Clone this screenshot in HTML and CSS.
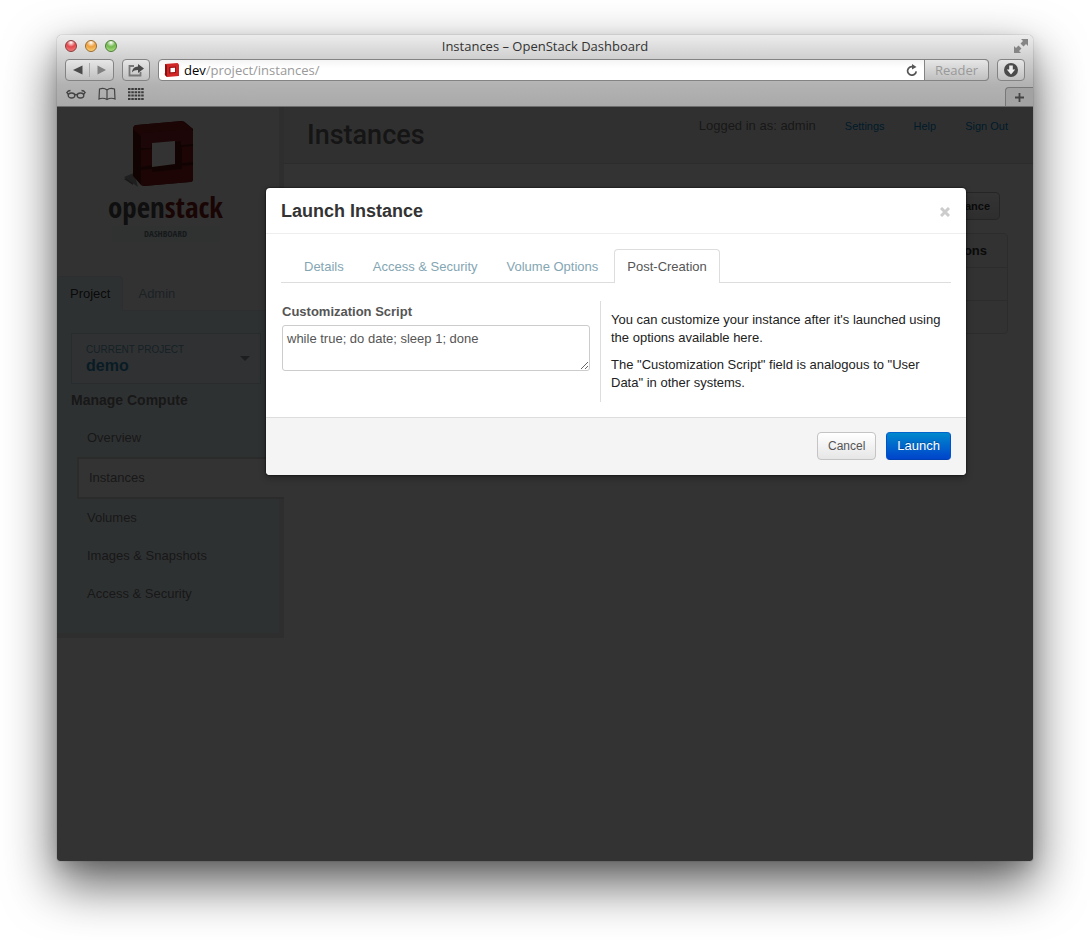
FILE: index.html
```html
<!DOCTYPE html>
<html lang="en">
<head>
<meta charset="utf-8">
<title>Instances – OpenStack Dashboard</title>
<meta name="viewport" content="width=device-width, initial-scale=1">
<link rel="stylesheet" href="styles.css">
</head>
<body>
<div class="browser">
  <header class="chrome">
    <div class="titlebar">
      <div class="lights">
        <button class="light light-close" aria-label="Close window"></button>
        <button class="light light-min" aria-label="Minimize window"></button>
        <button class="light light-max" aria-label="Zoom window"></button>
      </div>
      <div class="window-title">Instances – OpenStack Dashboard</div>
      <button class="bare fullscreen" aria-label="Full screen">
        <svg width="16" height="16" viewBox="0 0 16 16" fill="#858585"><path d="M8 1h7v7l-2-2-2.500 2.500-3-3L10 3zM1 8l2 2 2.500-2.500 3 3L6 13l2 2H1z"/></svg>
      </button>
    </div>
    <div class="toolbar">
      <div class="tool-group">
        <button class="bare" aria-label="Back"><svg width="10" height="10" viewBox="0 0 10 10"><path d="M0 5 9.500 .5v9z" fill="#4a4a4a"/></svg></button>
        <button class="bare forward" aria-label="Forward"><svg width="10" height="10" viewBox="0 0 10 10"><path d="M9 5 .5 .5v9z" fill="#808080"/></svg></button>
      </div>
      <button class="tool" aria-label="Share"><svg width="18" height="16" viewBox="0 0 18 16"><path d="M7 4H2.500V13.500h11V10" fill="none" stroke="#777" stroke-width="1.800"/><path d="M5 10.500C5.300 6.500 7.500 4.700 11 4.500V2l6 4.500-6 4.500V8C8.500 7.900 6.700 8.500 5 10.500z" fill="#4a4a4a"/></svg></button>
      <form class="address">
        <svg width="16" height="16" viewBox="0 0 16 16"><path d="M0 12l3-2v4z" fill="#888"/><path d="M1 2 13.500 1 15 2.500V14L3 15l-2-2z" fill="#d02626"/><path d="M1 2l2 1.500V15l-2-2z" fill="#8c1010"/><path d="M5 5l7-.5V11l-7 .5z" fill="#9c1414"/><path d="M6.500 6l4.500-.3V10l-4.500 .3z" fill="#fff"/></svg>
        <label class="host" for="url">dev</label>
        <input class="url" id="url" type="text" value="/project/instances/">
        <button class="bare reload" type="button" aria-label="Reload"><svg width="12" height="12" viewBox="0 0 12 12"><path d="M10.200 7.300A4.300 4.300 0 1 1 7 2.700" fill="none" stroke="#555" stroke-width="1.700"/><path d="M6 0v5.500L10.500 3z" fill="#555"/></svg></button>
        <button class="reader" type="button">Reader</button>
      </form>
      <button class="tool" aria-label="Downloads"><svg width="16" height="16" viewBox="0 0 16 16"><circle cx="8" cy="8" r="7" fill="#4b4b4b"/><path d="M6.200 3.500h3.600v4h2.400L8 12.500 3.800 7.500h2.400z" fill="#eee"/></svg></button>
    </div>
    <div class="bookmarks">
      <button class="bare" aria-label="Reading list"><svg width="20" height="12" viewBox="0 0 20 12" fill="none" stroke="#444" stroke-width="1.300"><ellipse cx="5.500" cy="7.500" rx="3.300" ry="2.500"/><ellipse cx="14.500" cy="7.500" rx="3.300" ry="2.500"/><path d="M8.800 7q1.200-1 2.400 0M2.500 6.500 .8 4.500q1.200-2 3.700-2M17.500 6.500l1.700-2q-1.200-2-3.700-2"/></svg></button>
      <button class="bare" aria-label="Bookmarks"><svg width="18" height="14" viewBox="0 0 18 14" fill="none" stroke="#444" stroke-width="1.200"><path d="M9 3Q6 .5 1.500 2L1 12Q5 10.300 9 12.500 13 10.300 17 12L16.500 2Q12 .5 9 3zV12"/></svg></button>
      <button class="bare" aria-label="Top sites"><svg width="16" height="12" viewBox="0 0 16 12"><path d="M0 1h16M0 4.300h16M0 7.600h16M0 10.900h16" stroke="#3c3c3c" stroke-width="2" stroke-dasharray="2.500 .8"/></svg></button>
      <button class="bare new-tab" aria-label="New tab"><svg width="9" height="9" viewBox="0 0 9 9"><path d="M4.500 0v9M0 4.500h9" stroke="#444" stroke-width="1.800"/></svg></button>
    </div>
  </header>

  <div class="viewport">
    <div class="page">
      <aside class="sidebar">
        <div class="brand">
          <svg width="84" height="68" viewBox="0 0 84 68">
            <path d="M0 58 9 54v10z" fill="#777"/>
            <path d="M0 56 10 52 14 66z" fill="#999"/>
            <path d="M9 8Q9 4 13 4L58 0Q60 0 62 2L69 8V58Q69 61 66 61L20 65 17 64 9 55z" fill="#5c1212"/>
            <path d="M12 4 58 0 69 8 20 12Q17 12 17 15L9 8Q10 4 12 4z" fill="#86191c"/>
            <path d="M17 15Q17 12 20 12L67 8 69 10V23L57 24V20L28 22 27 27 17 27z" fill="#8e2229"/>
            <path d="M17 29 28 28V44L17 46zM58 26 69 25V41L58 42zM17 49 28 48V51L58 48V45L69 44V58Q69 61 66 61L20 65 17 64z" fill="#8a1c18"/>
            <path d="M28 22 51 20V43L28 46z" fill="#fff"/>
          </svg>
          <div class="wordmark">open<span class="stack">stack</span></div>
          <div class="tagline">DASHBOARD</div>
        </div>
        <nav class="side-tabs">
          <a class="side-tab side-tab-active" href="#project">Project</a>
          <a class="side-tab" href="#admin">Admin</a>
        </nav>
        <div class="side-body">
          <button class="project">
            <span><span class="project-label">CURRENT PROJECT</span><span class="project-name">demo</span></span>
            <span class="caret"></span>
          </button>
          <h4 class="side-title">Manage Compute</h4>
          <nav class="side-nav">
            <a href="#overview">Overview</a>
            <a class="current" href="#instances">Instances</a>
            <a href="#volumes">Volumes</a>
            <a href="#images">Images &amp; Snapshots</a>
            <a href="#access">Access &amp; Security</a>
          </nav>
        </div>
      </aside>
      <main class="main">
        <div class="page-header">
          <h1>Instances</h1>
          <div class="user">
            <span class="login">Logged in as: admin</span>
            <a href="#settings">Settings</a>
            <a href="#help">Help</a>
            <a href="#signout">Sign Out</a>
          </div>
        </div>
        <div class="content">
          <button class="launch-button">Launch Instance</button>
          <table class="instances">
            <thead><tr><th>Actions</th></tr></thead>
            <tbody><tr><td></td></tr></tbody>
            <tfoot><tr><td></td></tr></tfoot>
          </table>
        </div>
      </main>
    </div>
    <div class="backdrop"></div>
    <section class="modal" role="dialog" aria-labelledby="modal-title">
      <div class="modal-header">
        <h3 id="modal-title">Launch Instance</h3>
        <button class="bare" aria-label="Close"><svg width="10" height="10" viewBox="0 0 10 10"><path d="M1 1l8 8M9 1 1 9" stroke="#ccc" stroke-width="3"/></svg></button>
      </div>
      <div class="modal-body">
        <nav class="tabs">
          <a href="#details">Details</a>
          <a href="#security">Access &amp; Security</a>
          <a href="#volume">Volume Options</a>
          <a class="active" href="#post">Post-Creation</a>
        </nav>
        <div class="columns">
          <div class="field">
            <label for="script">Customization Script</label>
            <textarea id="script">while true; do date; sleep 1; done</textarea>
          </div>
          <div class="help">
            <p>You can customize your instance after it's launched using the options available here.</p>
            <p>The "Customization Script" field is analogous to "User Data" in other systems.</p>
          </div>
        </div>
      </div>
      <div class="modal-footer">
        <button class="btn">Cancel</button>
        <button class="btn btn-primary">Launch</button>
      </div>
    </section>
  </div>
</div>
</body>
</html>
```

FILE: styles.css
```css
* { box-sizing: border-box; }
body {
  margin: 0;
  min-height: 100vh;
  padding: 35px 57px 79px;
  display: flex;
  background: #fff;
  color: #333;
  font: 13px/18px "Liberation Sans", Arial, sans-serif;
}
button, input, textarea { font: inherit; margin: 0; }
a { text-decoration: none; color: inherit; }
svg { display: block; flex: none; }
h1, h3, h4, p { margin: 0; }
.bare { padding: 0; border: 0; background: none; display: flex; align-items: center; justify-content: center; }

.browser {
  flex: 1;
  min-width: 0;
  display: flex;
  flex-direction: column;
  border-radius: 5px 5px 3px 3px;
  box-shadow: 0 0 1px rgba(0,0,0,.6), 0 6px 16px rgba(0,0,0,.12), 0 22px 50px 2px rgba(0,0,0,.62);
}

/* Browser chrome */
.chrome {
  font-family: "Open Sans", "Noto Sans", sans-serif;
  border-radius: 5px 5px 0 0;
  border-bottom: 1px solid #6d6d6d;
  background: linear-gradient(#ececec, #cfcfcf 24px, #b2b2b2 50px, #aaa);
}
.titlebar { display: grid; grid-template-columns: 1fr auto 1fr; align-items: center; height: 24px; padding: 0 4px 2px; }
.lights { display: flex; gap: 8px; padding-left: 4px; }
.light { width: 12px; height: 12px; padding: 0; border: 1px solid; border-radius: 50%; }
.light-close { border-color: #8c3a3a; background: radial-gradient(circle at 50% 15%, #fff, #e2474b 45%, #f58d8d); }
.light-min { border-color: #9b6a2a; background: radial-gradient(circle at 50% 15%, #fff, #ee9f3c 45%, #fce08c); }
.light-max { border-color: #4c7d33; background: radial-gradient(circle at 50% 15%, #fff, #72b84d 45%, #bdea94); }
.window-title { font-size: 13px; color: #333; }
.fullscreen { justify-self: end; }
.toolbar { display: flex; gap: 8px; padding: 0 8px; height: 22px; }
.tool-group, .tool, .reader {
  border: 1px solid #838383;
  border-radius: 4px;
  background: linear-gradient(#e6e6e6, #c0c0c0);
}
.tool-group { display: flex; width: 49px; padding: 3px 0; }
.tool-group .bare { flex: 1; }
.tool-group .forward { border-left: 1px solid #aaa; }
.tool { width: 28px; padding: 0; display: flex; align-items: center; justify-content: center; }
.address {
  flex: 1;
  min-width: 0;
  display: flex;
  align-items: center;
  padding-left: 5px;
  border: 1px solid #838383;
  border-radius: 4px;
  background: linear-gradient(#f4f4f4, #fff 8px);
}
.host { padding-left: 4px; color: #000; }
.url { flex: 1; min-width: 0; padding: 0; border: 0; background: none; color: #999; }
.reload { width: 24px; }
.reader { width: 65px; height: 22px; padding: 0; border-radius: 0 4px 4px 0; color: #999; margin-right: -1px; }
.bookmarks { display: flex; align-items: center; gap: 12px; height: 25px; padding-left: 9px; }
.new-tab { align-self: flex-end; margin-left: auto; width: 28px; height: 19px; border: 1px solid #777; border-width: 1px 0 0 1px; border-radius: 4px 0 0 0; background: #a2a2a2; }

/* Dashboard page */
.viewport { position: relative; flex: 1; border-radius: 0 0 3px 3px; overflow: hidden; background: #fff; }
.page { display: flex; align-items: flex-start; }
.sidebar { width: 227px; flex: none; border: solid #e4e4e4; border-width: 0 5px 5px 0; background: #f8f8f8; }
.brand { display: flex; flex-direction: column; align-items: center; height: 169px; padding: 14px 5px 0 0; }
.wordmark { font: 300 29px/36px "Open Sans Condensed", Lato, sans-serif; color: #4c4c4c; }
.stack { color: #801c1c; }
.tagline { width: 108px; margin-top: 1px; background: #edf2f3; color: #6b8189; text-align: center; font: 300 9px/16px "Open Sans Condensed", Lato, sans-serif; }
.side-tabs { display: flex; border-bottom: 1px solid #dce4e8; }
.side-tab { padding: 9px 15px 7px; color: #8aa9b5; }
.side-tab-active { margin-bottom: -1px; padding: 8px 12px 8px 13px; border: solid #dce4e8; border-width: 1px 1px 0 0; border-radius: 4px 4px 0 0; background: #e6f5f9; color: #333; }
.side-body { padding: 22px 0 20px 14px; background: #e6f5f9; }
.project { display: flex; align-items: center; justify-content: space-between; width: 190px; height: 51px; padding: 0 10px 0 14px; border: 1px solid #c8dde5; background: #eef5f7; text-align: left; }
.project-label { display: block; font-size: 10px; line-height: 14px; color: #6aa3bd; }
.project-name { display: block; font-size: 16px; font-weight: bold; color: #2d8cb8; }
.caret { border: 5px solid transparent; border-top-color: #8a9499; border-bottom: 0; }
.side-title { padding: 7px 0 10px; font-size: 14px; color: #777; }
.side-nav { display: flex; flex-direction: column; margin: 0 -5px 0 6px; }
.side-nav a { padding: 10px; color: #777; }
.side-nav .current { border: 2px solid #d8d8d8; border-right: 0; background: #fff; }
.main { flex: 1; min-width: 0; }
.page-header { display: flex; justify-content: space-between; height: 57px; padding: 10px 25px 0 23px; border-bottom: 1px solid #ddd; background: #f1f1f1; }
.page-header h1 { font: 500 27px/36px Roboto, sans-serif; color: #6a6a6a; }
.user { display: flex; align-items: flex-start; gap: 29px; font-size: 11px; color: #0088cc; }
.login { font-size: 13px; color: #777; }
.content { display: flex; flex-direction: column; align-items: flex-end; padding: 28px 25px; }
.launch-button { height: 28px; margin-right: 8px; padding: 0 9px; border: 1px solid #bbb; border-radius: 4px; background: linear-gradient(#fff, #e6e6e6); font-size: 11px; font-weight: bold; color: #333; }
.instances { width: 100%; margin-top: 13px; border: 1px solid #ddd; border-radius: 4px; border-spacing: 0; background: #f7f7f7; }
.instances th, .instances td { height: 33px; padding: 0 20px; text-align: right; }
.instances td { border-top: 1px solid #ddd; }

/* Dialog */
.backdrop { position: absolute; inset: 0; background: rgba(0,0,0,.8); }
.modal { position: absolute; top: 81px; left: 50%; width: 700px; margin-left: -279px; border-radius: 4px; background: #fff; box-shadow: 0 3px 7px rgba(0,0,0,.3), 0 0 2px #000; }
.modal-header { display: flex; align-items: center; justify-content: space-between; padding: 10px 16px 8px 15px; border-bottom: 1px solid #eee; }
.modal-header h3 { font-size: 18px; line-height: 27px; }
.modal-body { padding: 15px; }
.tabs { display: flex; gap: 3px; padding-left: 10px; border-bottom: 1px solid #ddd; }
.tabs a { margin-bottom: -1px; padding: 8px 12px 7px; border: 1px solid transparent; border-bottom: 0; border-radius: 4px 4px 0 0; color: #84a6b3; }
.tabs .active { border-color: #ddd; background: #fff; color: #555; }
.columns { display: grid; grid-template-columns: 1fr 351px; padding-top: 18px; }
.field { display: flex; flex-direction: column; gap: 4px; padding: 2px 10px 0 1px; }
.field label { font-weight: bold; color: #555; }
.field textarea { height: 46px; padding: 4px; border: 1px solid #ccc; border-radius: 3px; color: #555; resize: vertical; }
.help { display: flex; flex-direction: column; gap: 9px; padding: 10px 0 10px 10px; border-left: 1px solid #ddd; color: #222; }
.modal-footer { display: flex; justify-content: flex-end; gap: 10px; padding: 14px 15px 15px; border-top: 1px solid #ddd; border-radius: 0 0 4px 4px; background: #f4f4f4; }
.btn { height: 28px; padding: 0 10px; border: 1px solid #c4c4c4; border-radius: 4px; background: linear-gradient(#fff, #e6e6e6); color: #555; font-size: 12px; }
.btn-primary { border-color: #0064cc #0052cc #0040b0; background: linear-gradient(#0088cc, #0044cc); color: #fff; font-size: 13px; text-shadow: 0 -1px 0 rgba(0,0,0,.25); }
```
